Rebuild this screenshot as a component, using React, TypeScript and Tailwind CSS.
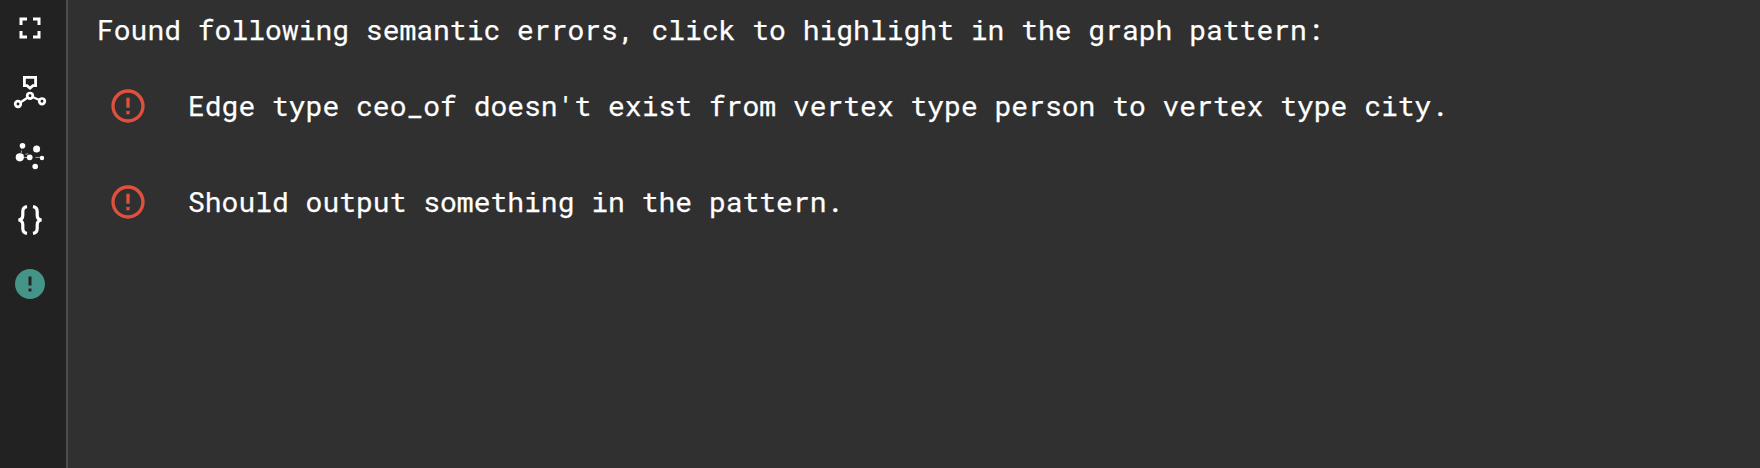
import type { ReactNode } from "react";
import { MdFullscreen, MdError, MdErrorOutline } from "react-icons/md";

function SchemaIcon() {
  return (
    <svg width="36" height="36" viewBox="0 0 36 36" fill="none" stroke="#fff">
      <path d="M12.4 3.4h11.2v8.2h-2.7L18 14.2l-2.9-2.6h-2.7z" strokeWidth="2.8" />
      <path d="M8.4 28.4l7-4.6M20.6 23l6.8 3" strokeWidth="2.4" />
      <circle cx="18" cy="21.8" r="2.8" strokeWidth="2.7" />
      <circle cx="6" cy="30" r="2.8" strokeWidth="2.7" />
      <circle cx="30" cy="27.3" r="2.8" strokeWidth="2.7" />
    </svg>
  );
}

function ScatterIcon() {
  return (
    <svg width="36" height="36" viewBox="0 0 36 36" fill="#fff">
      <g stroke="#fff" strokeWidth="0.8" opacity="0.75">
        <path d="M10.2 8L8.6 19M9 17.6L16 15.6" strokeDasharray="3 1.6" />
        <path d="M8 19.4h10M23.4 19.4h6" />
      </g>
      <circle cx="10.5" cy="7.7" r="2.8" />
      <circle cx="7.8" cy="19.3" r="4.1" />
      <circle cx="17.7" cy="19.3" r="2.9" />
      <circle cx="24.6" cy="11" r="3.5" />
      <circle cx="30" cy="20" r="2.2" />
      <circle cx="23.2" cy="28.5" r="2.8" />
    </svg>
  );
}

function BracesIcon() {
  return (
    <svg width="36" height="36" viewBox="0 0 36 36" fill="none" stroke="#fff" strokeWidth="3.2">
      <path d="M15 4.7C11.8 5.2 10.8 7 10.8 9.6v3.6C10.8 16 9.6 17.6 6.5 18c3.1.4 4.3 2 4.3 4.8v3.6c0 2.6 1 4.4 4.2 4.9" />
      <path d="M21 4.7c3.2.5 4.2 2.3 4.2 4.9v3.6c0 2.8 1.2 4.4 4.3 4.8-3.1.4-4.3 2-4.3 4.8v3.6c0 2.6-1 4.4-4.2 4.9" />
    </svg>
  );
}

function ToolButton({ label, children }: { label: string; children: ReactNode }) {
  return (
    <button aria-label={label} className="size-9 shrink-0">
      {children}
    </button>
  );
}

const errors = [
  "Edge type ceo_of doesn't exist from vertex type person to vertex type city.",
  "Should output something in the pattern.",
];

export default function App() {
  return (
    <div className="flex h-[468px] w-full overflow-hidden bg-[#303030] text-white">
      <nav className="flex w-[68px] shrink-0 flex-col gap-7 border-r-2 border-[#4d4d4d] bg-[#222222] pt-2.5 pl-3">
        <ToolButton label="Fullscreen"><MdFullscreen size={36} /></ToolButton>
        <ToolButton label="Schema"><SchemaIcon /></ToolButton>
        <ToolButton label="Graph"><ScatterIcon /></ToolButton>
        <ToolButton label="JSON"><BracesIcon /></ToolButton>
        <ToolButton label="Errors"><MdError size={36} color="#449588" /></ToolButton>
      </nav>
      <main className="flex-1 pl-7 font-['Roboto_Mono','Liberation_Mono',monospace] text-[28px] leading-10 whitespace-nowrap [-webkit-text-stroke:0.25px_white]">
        <p className="pt-2.5 pl-px">Found following semantic errors, click to highlight in the graph pattern:</p>
        <ul className="pt-2">
          {errors.map((message) => (
            <li key={message} className="flex h-24 items-center gap-10 pl-3">
              <MdErrorOutline size={40} color="#e0503f" className="shrink-0" />
              <span>{message}</span>
            </li>
          ))}
        </ul>
      </main>
    </div>
  );
}
